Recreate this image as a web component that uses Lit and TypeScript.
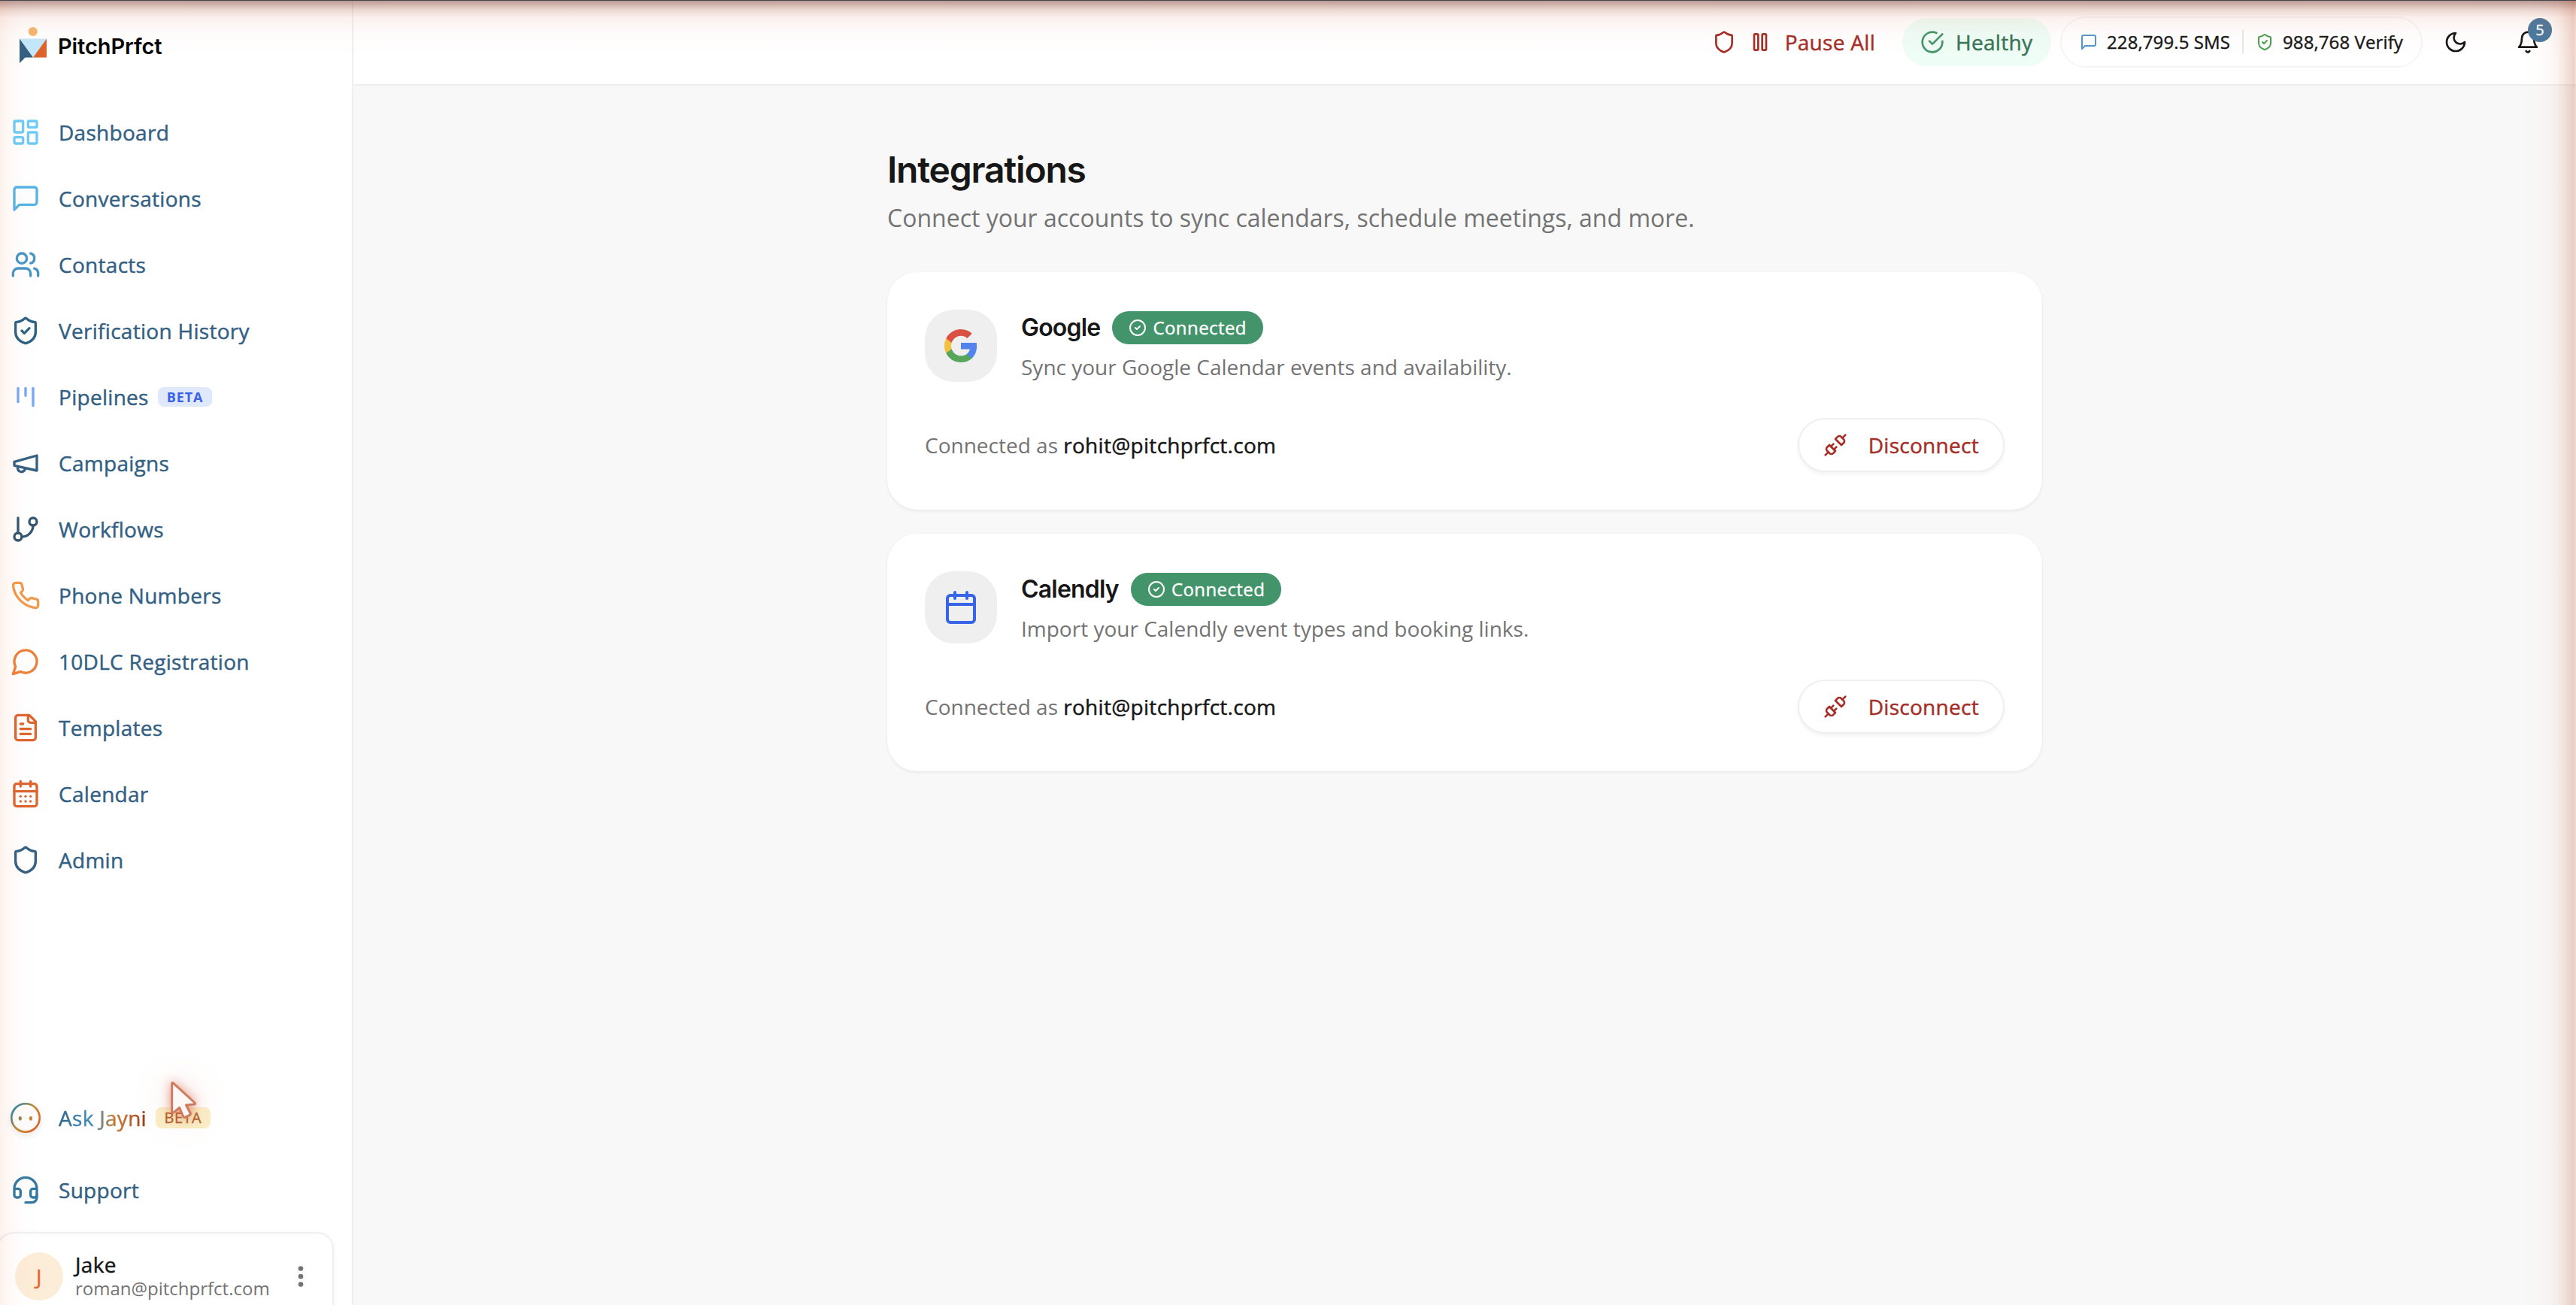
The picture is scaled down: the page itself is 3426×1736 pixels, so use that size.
import { LitElement, html, css, svg } from "lit";
import { customElement, property } from "lit/decorators.js";

const ICONS: Record<string, unknown> = {
  dashboard: svg`<rect x="3" y="3" width="7" height="9" rx="1"/><rect x="14" y="3" width="7" height="5" rx="1"/><rect x="14" y="12" width="7" height="9" rx="1"/><rect x="3" y="16" width="7" height="5" rx="1"/>`,
  message: svg`<path d="M21 15a2 2 0 0 1-2 2H7l-4 4V5a2 2 0 0 1 2-2h14a2 2 0 0 1 2 2z"/>`,
  users: svg`<path d="M16 21v-2a4 4 0 0 0-4-4H6a4 4 0 0 0-4 4v2"/><circle cx="9" cy="7" r="4"/><path d="M22 21v-2a4 4 0 0 0-3-3.87"/><path d="M16 3.13a4 4 0 0 1 0 7.75"/>`,
  shield: svg`<path d="M20 13c0 5-3.5 7.5-7.66 8.95a1 1 0 0 1-.67-.01C7.5 20.5 4 18 4 13V6a1 1 0 0 1 1-1c2 0 4.5-1.2 6.24-2.72a1.17 1.17 0 0 1 1.52 0C14.51 3.81 17 5 19 5a1 1 0 0 1 1 1z"/>`,
  shieldCheck: svg`<path d="M20 13c0 5-3.5 7.5-7.66 8.95a1 1 0 0 1-.67-.01C7.5 20.5 4 18 4 13V6a1 1 0 0 1 1-1c2 0 4.5-1.2 6.24-2.72a1.17 1.17 0 0 1 1.52 0C14.51 3.81 17 5 19 5a1 1 0 0 1 1 1z"/><path d="m9 12 2 2 4-4"/>`,
  kanban: svg`<path d="M6 5v11"/><path d="M12 5v6"/><path d="M18 5v14"/>`,
  megaphone: svg`<path d="m3 11 18-5v12L3 14v-3z"/><path d="M11.6 16.8a3 3 0 1 1-5.8-1.6"/>`,
  branch: svg`<line x1="6" x2="6" y1="3" y2="15"/><circle cx="18" cy="6" r="3"/><circle cx="6" cy="18" r="3"/><path d="M18 9a9 9 0 0 1-9 9"/>`,
  phone: svg`<path d="M22 16.92v3a2 2 0 0 1-2.18 2 19.79 19.79 0 0 1-8.63-3.07 19.5 19.5 0 0 1-6-6 19.79 19.79 0 0 1-3.07-8.67A2 2 0 0 1 4.11 2h3a2 2 0 0 1 2 1.72 12.84 12.84 0 0 0 .7 2.81 2 2 0 0 1-.45 2.11L8.09 9.91a16 16 0 0 0 6 6l1.27-1.27a2 2 0 0 1 2.11-.45 12.84 12.84 0 0 0 2.81.7A2 2 0 0 1 22 16.92z"/>`,
  circleMessage: svg`<path d="M7.9 20A9 9 0 1 0 4 16.1L2 22Z"/>`,
  file: svg`<path d="M15 2H6a2 2 0 0 0-2 2v16a2 2 0 0 0 2 2h12a2 2 0 0 0 2-2V7Z"/><path d="M14 2v4a2 2 0 0 0 2 2h4"/><path d="M10 9H8"/><path d="M16 13H8"/><path d="M16 17H8"/>`,
  calendarDays: svg`<path d="M8 2v4"/><path d="M16 2v4"/><rect width="18" height="18" x="3" y="4" rx="2"/><path d="M3 10h18"/><path d="M8 14h.01"/><path d="M12 14h.01"/><path d="M16 14h.01"/><path d="M8 18h.01"/><path d="M12 18h.01"/><path d="M16 18h.01"/>`,
  calendar: svg`<path d="M8 2v4"/><path d="M16 2v4"/><rect width="18" height="18" x="3" y="4" rx="2"/><path d="M3 10h18"/>`,
  headset: svg`<path d="M3 11h3a2 2 0 0 1 2 2v3a2 2 0 0 1-2 2H5a2 2 0 0 1-2-2v-5Zm0 0a9 9 0 1 1 18 0m0 0v5a2 2 0 0 1-2 2h-1a2 2 0 0 1-2-2v-3a2 2 0 0 1 2-2h3Z"/><path d="M21 16v2a4 4 0 0 1-4 4h-5"/>`,
  pause: svg`<rect x="14" y="4" width="4" height="16" rx="1"/><rect x="6" y="4" width="4" height="16" rx="1"/>`,
  checkBig: svg`<path d="M22 11.08V12a10 10 0 1 1-5.93-9.14"/><path d="m9 11 3 3L22 4"/>`,
  check: svg`<circle cx="12" cy="12" r="10"/><path d="m9 12 2 2 4-4"/>`,
  moon: svg`<path d="M12 3a6 6 0 0 0 9 9 9 9 0 1 1-9-9Z"/>`,
  bell: svg`<path d="M6 8a6 6 0 0 1 12 0c0 7 3 9 3 9H3s3-2 3-9"/><path d="M10.3 21a1.94 1.94 0 0 0 3.4 0"/>`,
  unplug: svg`<path d="m19 5 3-3"/><path d="m2 22 3-3"/><path d="M6.3 20.3a2.4 2.4 0 0 0 3.4 0L12 18l-6-6-2.3 2.3a2.4 2.4 0 0 0 0 3.4Z"/><path d="M7.5 13.5 10 11"/><path d="M10.5 16.5 13 14"/><path d="m12 6 6 6 2.3-2.3a2.4 2.4 0 0 0 0-3.4l-2.6-2.6a2.4 2.4 0 0 0-3.4 0Z"/>`,
};

/* Medium weight: Open Sans ships here only as regular and bold. */
const medium = css`
  .medium { font-weight: 400; letter-spacing: 0.0103em; -webkit-text-stroke: 0.016em currentColor; }
`;

@customElement("line-icon")
class LineIcon extends LitElement {
  @property() name = "";
  static styles = css`
    :host { display: block; flex: none; width: 32px; height: 32px; }
    .glyph { display: block; width: 100%; height: 100%; overflow: visible; fill: none; stroke: currentColor; stroke-width: 2; stroke-linecap: round; stroke-linejoin: round; }
  `;
  render() {
    return html`<svg class="glyph" viewBox="0 0 24 24">${ICONS[this.name]}</svg>`;
  }
}

const NAV = [
  { label: "Dashboard", icon: "dashboard", color: "#6dcbf7" },
  { label: "Conversations", icon: "message", color: "#56b4e6" },
  { label: "Contacts", icon: "users", color: "#4596c8" },
  { label: "Verification History", icon: "shieldCheck", color: "#2b6383" },
  { label: "Pipelines", icon: "kanban", color: "#78a7f5", beta: true },
  { label: "Campaigns", icon: "megaphone", color: "#336083" },
  { label: "Workflows", icon: "branch", color: "#335672" },
  { label: "Phone Numbers", icon: "phone", color: "#f09a4d" },
  { label: "10DLC Registration", icon: "circleMessage", color: "#ed7f38" },
  { label: "Templates", icon: "file", color: "#de6430" },
  { label: "Calendar", icon: "calendarDays", color: "#de6430" },
  { label: "Admin", icon: "shield", color: "#336083" },
];

@customElement("app-sidebar")
class AppSidebar extends LitElement {
  static styles = [medium, css`
    :host { display: flex; flex-direction: column; box-sizing: border-box; height: 1736px; background: #fff; border-right: 2px solid #efefef; overflow: hidden; font: 400 28px/40px "Open Sans", "Noto Sans", sans-serif; color: #336083; }
    .brand { display: flex; height: 132px; flex: none; box-sizing: border-box; padding: 36px 0 0 26px; gap: 15px; }
    .mark { display: block; width: 36px; height: 49px; overflow: visible; }
    .wordmark { font: 600 29px/36px Inter, sans-serif; color: #060606; letter-spacing: -0.1px; margin-top: 8px; }
    .nav { flex: 1; }
    .item { display: flex; align-items: center; height: 88px; padding-left: 14px; }
    .item line-icon { width: 40px; height: 40px; margin-right: 24px; }
    .tall { height: 96px; }
    .beta { margin-left: 12px; height: 26px; box-sizing: border-box; padding: 0 12px; border-radius: 8px; background: #dfe9fb; color: #3b62e6; font-size: 18px; line-height: 26px; font-weight: 700; letter-spacing: 0.9px; }
    .face { display: block; width: 40px; height: 40px; margin-right: 24px; overflow: visible; filter: drop-shadow(0 3px 4px rgba(0,0,0,0.09)); }
    .jayni { background: linear-gradient(90deg, #2f6486 0%, #4590bd 38%, #c07a34 62%, #c4652c 78%, #963a1c 100%); -webkit-background-clip: text; background-clip: text; color: transparent; }
    .gold { height: 28px; line-height: 28px; margin-left: 12px; padding: 0 11.5px; background: #faefc8; color: #b4622e; font-size: 20px; font-weight: 400; letter-spacing: 0.5px; -webkit-text-stroke: 0.35px currentColor; }
    .user { display: flex; align-items: center; flex: none; box-sizing: border-box; height: 118px; margin: 8px 24px -21px -4px; padding: 0 38px 0 22px; border: 2px solid #efefef; border-radius: 22px; box-shadow: 0 2px 6px rgba(0,0,0,0.05); background: #fff; }
    .avatar { width: 64px; height: 64px; border-radius: 50%; background: #fcedd8; color: #e4672f; text-align: center; line-height: 64px; margin-right: 16px; }
    .who { flex: 1; line-height: 32px; }
    .name { color: #171717; }
    .mail { font-size: 24px; color: #737373; }
    .dots { display: block; width: 8px; height: 32px; fill: #737373; }
  `];
  render() {
    return html`
      <div class="brand">
        <svg class="mark" viewBox="0 0 36 49">
          <circle cx="17.8" cy="6" r="6" fill="#f4b771" />
          <path d="M0 15.5h36L18 40.5z" fill="#c3e8fc" />
          <path d="M0 15.5l18 25H7.5L0 48z" fill="#355f80" />
          <path d="M36 15.5v25H18z" fill="#dd622b" />
        </svg>
        <span class="wordmark">PitchPrfct</span>
      </div>
      <nav class="nav">
        ${NAV.map((n) => html`<div class="item"><line-icon name=${n.icon} style="color:${n.color}"></line-icon><span class="medium">${n.label}</span>${n.beta ? html`<span class="beta">BETA</span>` : ""}</div>`)}
      </nav>
      <div class="item tall">
        <svg class="face" viewBox="0 0 40 40">
          <defs><linearGradient id="ring" gradientUnits="userSpaceOnUse" x1="4" y1="8" x2="36" y2="32"><stop offset="0" stop-color="#2f86a0" /><stop offset="0.5" stop-color="#c68a2c" /><stop offset="1" stop-color="#dd622b" /></linearGradient></defs>
          <circle cx="20" cy="20" r="18.7" fill="#fdfcfb" stroke="url(#ring)" stroke-width="2.6" />
          <ellipse cx="12.8" cy="20.7" rx="2.1" ry="2.8" fill="#8b8a4b" />
          <ellipse cx="27" cy="20.7" rx="2.1" ry="2.8" fill="#d07f2b" />
        </svg>
        <span class="medium jayni">Ask Jayni</span><span class="beta gold">BETA</span>
      </div>
      <div class="item tall"><line-icon name="headset" style="color:#3479a3"></line-icon><span class="medium">Support</span></div>
      <div class="user">
        <div class="avatar medium">J</div>
        <div class="who"><div class="name medium">Jake</div><div class="mail">roman@pitchprfct.com</div></div>
        <svg class="dots" viewBox="0 0 8 32"><circle cx="4" cy="5.5" r="3.3" /><circle cx="4" cy="16" r="3.3" /><circle cx="4" cy="26.5" r="3.3" /></svg>
      </div>
    `;
  }
}

@customElement("app-header")
class AppHeader extends LitElement {
  static styles = [medium, css`
    :host { display: flex; align-items: center; justify-content: flex-end; box-sizing: border-box; height: 114px; padding-right: 48px; background: #fff; border-bottom: 2px solid #eeeeee; font: 400 28px/40px "Open Sans", "Noto Sans", sans-serif; color: #171717; }
    .pause { display: flex; align-items: center; gap: 16px; color: #a52e26; margin-right: 36px; }
    .pause span { margin-left: 1px; }
    .healthy { display: flex; align-items: center; gap: 15px; box-sizing: border-box; width: 198px; height: 64px; padding-left: 24px; border-radius: 32px; background: #eefdf6; color: #387455; margin-right: 12px; }
    .ok { color: #43946a; }
    .credits { display: flex; align-items: center; box-sizing: border-box; width: 482px; height: 68px; padding-left: 24px; border: 2px solid #f5f5f5; border-radius: 34px; font-size: 24px; margin-right: 28px; }
    .credits line-icon { width: 24px; height: 24px; margin-right: 12px; }
    .credits .medium { letter-spacing: 0.1px; }
    .sms { color: #5396c8; }
    .verify { color: #46a04c; }
    .rule { width: 2px; height: 32px; background: #e8e8e8; margin: 0 16px; }
    .bell { position: relative; margin-left: 64px; }
    .count { position: absolute; left: 16px; top: -16px; width: 32px; height: 32px; border-radius: 50%; background: #49799f; color: #fff; text-align: center; font-size: 20px; line-height: 32px; }
  `];
  render() {
    return html`
      <div class="pause"><line-icon name="shield"></line-icon><line-icon name="pause"></line-icon><span class="medium">Pause All</span></div>
      <div class="healthy"><line-icon class="ok" name="checkBig"></line-icon><span class="medium">Healthy</span></div>
      <div class="credits">
        <line-icon class="sms" name="message"></line-icon><span class="medium">228,799.5 SMS</span>
        <span class="rule"></span>
        <line-icon class="verify" name="shieldCheck"></line-icon><span class="medium">988,768 Verify</span>
      </div>
      <line-icon name="moon"></line-icon>
      <div class="bell"><line-icon name="bell"></line-icon><span class="count medium">5</span></div>
    `;
  }
}

@customElement("integration-card")
class IntegrationCard extends LitElement {
  @property() name = "";
  @property() description = "";
  @property() account = "";
  @property() logo = "";
  static styles = [medium, css`
    :host { display: block; box-sizing: border-box; height: 316px; padding: 50px; border-radius: 40px; background: #fff; box-shadow: 0 2px 4px rgba(0,0,0,0.06), 0 0 2px rgba(0,0,0,0.04); font: 400 28px/40px "Open Sans", "Noto Sans", sans-serif; color: #737373; }
    .head { display: flex; gap: 32px; height: 96px; margin-bottom: 48px; }
    .tile { display: flex; align-items: center; justify-content: center; width: 96px; height: 96px; border-radius: 38px; background: #efefef; color: #3864e8; }
    .tile line-icon, .g { display: block; width: 48px; height: 48px; }
    .row { display: flex; align-items: center; gap: 16px; height: 48px; margin-bottom: 8px; }
    .title { font: 600 32px/48px Inter, sans-serif; letter-spacing: -0.8px; color: #171717; }
    .badge { display: flex; align-items: center; gap: 8px; height: 44px; padding: 0 22px; border-radius: 22px; background: #43946a; color: #fff; font-size: 24px; }
    .badge .medium { letter-spacing: 0.42px; }
    .badge line-icon { width: 24px; height: 24px; }
    .foot { display: flex; align-items: center; justify-content: space-between; height: 72px; }
    .mail { color: #171717; }
    .btn { display: flex; align-items: center; gap: 28px; box-sizing: border-box; height: 72px; padding: 0 32px; border: 2px solid #efefef; border-radius: 36px; background: #fff; color: #a52e26; box-shadow: 0 3px 5px rgba(0,0,0,0.05); }
  `];
  render() {
    return html`
      <div class="head">
        <div class="tile">
          ${this.logo === "google"
            ? html`<svg class="g" viewBox="0 0 24 24">
                <path fill="#5383ec" d="M22.56 12.25c0-.78-.07-1.53-.2-2.25H12v4.26h5.92c-.26 1.37-1.04 2.53-2.21 3.31v2.77h3.57c2.08-1.92 3.28-4.74 3.28-8.09z" />
                <path fill="#58a55c" d="M12 23c2.97 0 5.46-.98 7.28-2.66l-3.57-2.77c-.98.66-2.23 1.06-3.71 1.06-2.86 0-5.29-1.93-6.16-4.53H2.18v2.84C3.99 20.53 7.7 23 12 23z" />
                <path fill="#f1bf42" d="M5.84 14.09c-.22-.66-.35-1.36-.35-2.09s.13-1.43.35-2.09V7.07H2.18C1.43 8.55 1 10.22 1 12s.43 3.45 1.18 4.93l2.85-2.22.81-.62z" />
                <path fill="#d95140" d="M12 5.38c1.62 0 3.06.56 4.21 1.64l3.15-3.15C17.45 2.09 14.97 1 12 1 7.7 1 3.99 3.47 2.18 7.07l3.66 2.84c.87-2.6 3.3-4.53 6.16-4.53z" />
              </svg>`
            : html`<line-icon name="calendar"></line-icon>`}
        </div>
        <div>
          <div class="row"><span class="title">${this.name}</span><span class="badge"><line-icon name="check"></line-icon><span class="medium">Connected</span></span></div>
          <div>${this.description}</div>
        </div>
      </div>
      <div class="foot">
        <div>Connected as <span class="mail medium">${this.account}</span></div>
        <div class="btn"><line-icon name="unplug"></line-icon><span class="medium">Disconnect</span></div>
      </div>
    `;
  }
}

@customElement("app-root")
class AppRoot extends LitElement {
  static styles = css`
    :host { display: grid; grid-template-columns: 470px 1fr; position: relative; width: 3426px; height: 1736px; overflow: hidden; background: #f8f8f8; }
    .page { width: 1536px; margin: 0 auto; padding-top: 80px; }
    .heading { margin: 0; font: 600 48px/64px Inter, sans-serif; letter-spacing: -1.2px; color: #171717; }
    .sub { margin: 8px 0 48px; font: 400 32px/48px "Open Sans", "Noto Sans", sans-serif; color: #737373; }
    .cards { display: grid; gap: 32px; }
    .glow { position: absolute; inset: 0; pointer-events: none; border-top: 1px solid #41464d; background:
      linear-gradient(180deg, rgba(70,25,30,0.32) 0, rgba(80,30,30,0.22) 5px, rgba(90,30,20,0.08) 12px, transparent 22px) top / 100% 80px no-repeat,
      linear-gradient(180deg, rgba(205,90,50,0.24) 0, rgba(205,90,50,0.15) 12px, rgba(205,90,50,0.07) 26px, rgba(205,90,50,0.02) 44px, rgba(205,90,50,0) 76px) top / 100% 80px no-repeat,
      linear-gradient(270deg, rgba(205,100,70,0.22) 0, rgba(205,100,70,0.22) 2px, rgba(190,90,50,0.28) 2px, rgba(190,90,50,0.16) 14px, rgba(195,95,55,0.08) 24px, rgba(190,110,60,0.035) 36px, rgba(190,120,60,0.01) 52px, rgba(190,120,60,0) 74px) right / 80px 100% no-repeat,
      linear-gradient(90deg, rgba(220,90,40,0.08) 0, rgba(220,90,40,0.04) 12px, rgba(220,110,60,0.012) 28px, rgba(220,110,60,0) 56px) left / 60px 100% no-repeat; }
    .cursor { position: absolute; left: 168px; top: 1380px; width: 140px; height: 160px; overflow: visible; filter: drop-shadow(0 0 7px rgba(205,85,50,0.6)) drop-shadow(0 0 22px rgba(205,85,50,0.22)); }
  `;
  render() {
    return html`
      <app-sidebar></app-sidebar>
      <div>
        <app-header></app-header>
        <main class="page">
          <h1 class="heading">Integrations</h1>
          <p class="sub">Connect your accounts to sync calendars, schedule meetings, and more.</p>
          <div class="cards">
            <integration-card name="Google" logo="google" description="Sync your Google Calendar events and availability." account="rohit@pitchprfct.com"></integration-card>
            <integration-card name="Calendly" logo="calendly" description="Import your Calendly event types and booking links." account="rohit@pitchprfct.com"></integration-card>
          </div>
        </main>
      </div>
      <div class="glow"></div>
      <svg class="cursor" viewBox="168 1380 140 160">
        <path d="M228.7 1441.5Q228.7 1439.5 230.5 1440.8L259 1467Q260.4 1469 258 1469L247.5 1470L253.2 1481Q253.6 1482.6 252.3 1483.4L246 1486.4Q244.6 1486.8 243.8 1485.4L238.7 1473.5L230.8 1479.8Q228.7 1481 228.7 1478.6Z" fill="#fbf8f6" stroke="#ce7c60" stroke-width="3" stroke-linejoin="round" />
      </svg>
    `;
  }
}
